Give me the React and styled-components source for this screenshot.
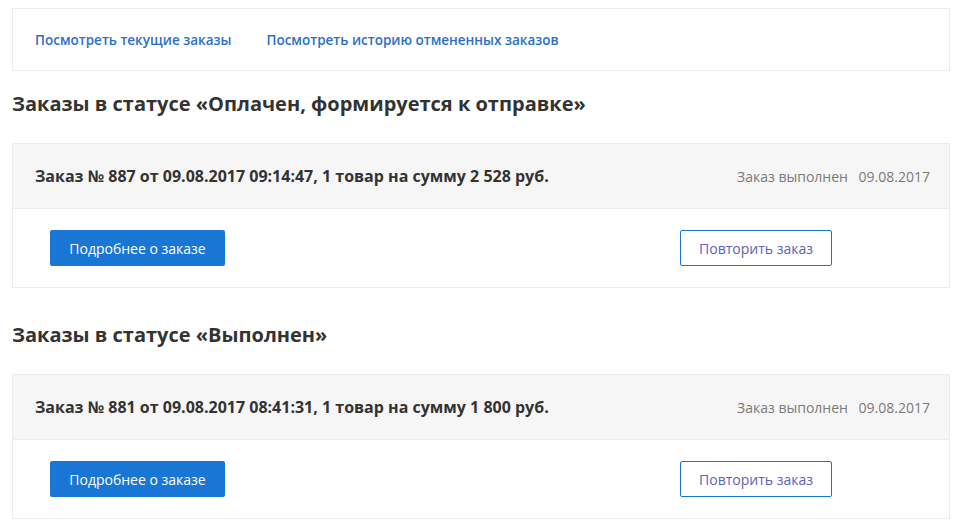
import React from 'react';
import styled, { createGlobalStyle } from 'styled-components';

const GlobalStyle = createGlobalStyle`
  body {
    margin: 0;
    background: #fff;
    font-family: "Open Sans", "Noto Sans", sans-serif;
    color: #333;
  }
`;

const orderGroups = [
  {
    title: 'Заказы в статусе «Оплачен, формируется к отправке»',
    orders: [
      { id: 887, date: '09.08.2017 09:14:47', count: '1 товар', sum: '2 528', done: '09.08.2017' },
    ],
  },
  {
    title: 'Заказы в статусе «Выполнен»',
    orders: [
      { id: 881, date: '09.08.2017 08:41:31', count: '1 товар', sum: '1 800', done: '09.08.2017' },
    ],
  },
];

function App() {
  return (
    <Page>
      <GlobalStyle />
      <NavBox>
        <NavLink href="#">Посмотреть текущие заказы</NavLink>
        <NavLink href="#">Посмотреть историю отмененных заказов</NavLink>
      </NavBox>

      {orderGroups.map((group) => (
        <Section key={group.title}>
          <SectionTitle>{group.title}</SectionTitle>
          {group.orders.map((order) => (
            <OrderCard key={order.id}>
              <OrderHeader>
                <OrderTitle>
                  Заказ № {order.id} от {order.date}, {order.count} на сумму {order.sum} руб.
                </OrderTitle>
                <OrderStatus>
                  Заказ выполнен <StatusDate>{order.done}</StatusDate>
                </OrderStatus>
              </OrderHeader>
              <OrderBody>
                <PrimaryButton>Подробнее о заказе</PrimaryButton>
                <OutlineButton>Повторить заказ</OutlineButton>
              </OrderBody>
            </OrderCard>
          ))}
        </Section>
      ))}
    </Page>
  );
}

const Page = styled.div`
  width: 938px;
  padding: 8px 0 0 12px;
`;

const NavBox = styled.div`
  display: flex;
  align-items: center;
  gap: 35px;
  height: 61px;
  padding: 0 22px;
  border: 1px solid #ececec;
`;

const NavLink = styled.a`
  font-size: 13.5px;
  font-weight: 600;
  color: #2d6fc6;
  text-decoration: none;
  margin-top: 1px;
`;

const Section = styled.section`
  margin-top: 20px;

  & + & {
    margin-top: 34px;
  }
`;

const SectionTitle = styled.h2`
  margin: 0 0 26px;
  font-size: 20px;
  font-weight: 700;
  line-height: 26px;
  color: #333;
`;

const OrderCard = styled.div`
  border: 1px solid #ececec;
`;

const OrderHeader = styled.div`
  display: flex;
  align-items: center;
  justify-content: space-between;
  height: 64px;
  padding: 0 19px 0 22px;
  background: #f6f6f6;
  border-bottom: 1px solid #ececec;
`;

const OrderTitle = styled.div`
  font-size: 16px;
  font-weight: 700;
  color: #333;
`;

const OrderStatus = styled.div`
  font-size: 14px;
  color: #7a7a7a;
`;

const StatusDate = styled.span`
  margin-left: 7px;
`;

const OrderBody = styled.div`
  display: flex;
  align-items: flex-start;
  justify-content: space-between;
  height: 78px;
  padding: 21px 117px 0 37px;
  box-sizing: border-box;
`;

const BaseButton = styled.button`
  height: 36px;
  border-radius: 2px;
  font-family: "Open Sans", "Noto Sans", sans-serif;
  font-size: 14px;
  cursor: pointer;
`;

const PrimaryButton = styled(BaseButton)`
  width: 175px;
  border: none;
  background: #1a76d4;
  color: #fff;
`;

const OutlineButton = styled(BaseButton)`
  width: 152px;
  border: 1px solid #1a76d4;
  background: #fff;
  color: #5863b9;
`;

export default App;
